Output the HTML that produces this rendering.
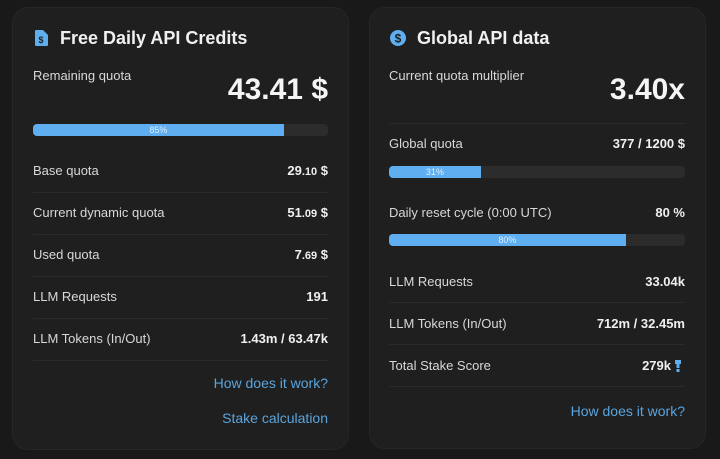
<!DOCTYPE html>
<html><head><meta charset="utf-8"><style>
*{margin:0;padding:0;box-sizing:border-box}
body{width:720px;height:459px;background:#191919;font-family:"Liberation Sans",sans-serif;position:relative;overflow:hidden;color:#e6e6e6}
.card{position:absolute;top:7px;background:#1f1f1f;border:1px solid #262626;border-radius:16px}
.a{position:absolute;white-space:nowrap}
.t{font-size:18px;font-weight:bold;color:#f0f0f0}
.l{font-size:13px;color:#d8d8d8}
.v{font-size:13px;font-weight:bold;color:#f0f0f0;text-align:right}
.v small{font-size:11px}
.big{font-size:30px;font-weight:bold;color:#f5f5f5;text-align:right}
.bar{position:absolute;height:12px;background:#2c2c2c;border-radius:4px;overflow:hidden}
.bar div{height:100%;background:#5eaef0;font-size:9px;color:#dff0ff;text-align:center;line-height:12px}
.hr{position:absolute;height:1px;background:#2a2a2a}
.lk{font-size:14px;color:#5aa5de;text-align:right}
</style></head><body>
<div class="card" style="left:12px;width:337px;height:443px"></div>
<div class="card" style="left:369px;width:337px;height:442px"></div>

<svg class="a" style="left:35px;top:30px" width="13" height="16" viewBox="0 0 13 16"><path d="M1 0h7l5 5v10a1 1 0 0 1-1 1H1a1 1 0 0 1-1-1V1a1 1 0 0 1 1-1z" fill="#5eaef0"/><text x="6" y="13" font-size="9" font-weight="bold" fill="#1f1f1f" text-anchor="middle" font-family="Liberation Sans">$</text></svg>
<div class="a t" style="left:60px;top:28px">Free Daily API Credits</div>
<div class="a l" style="left:33px;top:68px">Remaining quota</div>
<div class="a big" style="right:392px;top:73px">43.41 $</div>
<div class="bar" style="left:33px;top:124px;width:295px"><div style="width:85%">85%</div></div>

<div class="a l" style="left:33px;top:163px">Base quota</div><div class="a v" style="right:392px;top:163px">29<small>.10</small> $</div>
<div class="hr" style="left:33px;width:295px;top:192px"></div>
<div class="a l" style="left:33px;top:205px">Current dynamic quota</div><div class="a v" style="right:392px;top:205px">51<small>.09</small> $</div>
<div class="hr" style="left:33px;width:295px;top:234px"></div>
<div class="a l" style="left:33px;top:247px">Used quota</div><div class="a v" style="right:392px;top:247px">7<small>.69</small> $</div>
<div class="hr" style="left:33px;width:295px;top:276px"></div>
<div class="a l" style="left:33px;top:289px">LLM Requests</div><div class="a v" style="right:392px;top:289px">191</div>
<div class="hr" style="left:33px;width:295px;top:318px"></div>
<div class="a l" style="left:33px;top:331px">LLM Tokens (In/Out)</div><div class="a v" style="right:392px;top:331px">1.43m / 63.47k</div>
<div class="hr" style="left:33px;width:295px;top:360px"></div>
<div class="a lk" style="right:392px;top:375px">How does it work?</div>
<div class="a lk" style="right:392px;top:410px">Stake calculation</div>

<svg class="a" style="left:390px;top:30px" width="16" height="16" viewBox="0 0 16 16"><circle cx="8" cy="8" r="8" fill="#5eaef0"/><text x="8" y="12.5" font-size="12" font-weight="bold" fill="#1f1f1f" text-anchor="middle" font-family="Liberation Sans">$</text></svg>
<div class="a t" style="left:417px;top:28px">Global API data</div>
<div class="a l" style="left:389px;top:68px">Current quota multiplier</div>
<div class="a big" style="right:35px;top:73px">3.40x</div>
<div class="hr" style="left:389px;width:296px;top:123px"></div>
<div class="a l" style="left:389px;top:136px">Global quota</div><div class="a v" style="right:35px;top:136px">377 / 1200 $</div>
<div class="bar" style="left:389px;top:166px;width:296px"><div style="width:31%">31%</div></div>
<div class="a l" style="left:389px;top:205px">Daily reset cycle (0:00 UTC)</div><div class="a v" style="right:35px;top:205px">80 %</div>
<div class="bar" style="left:389px;top:234px;width:296px"><div style="width:80%">80%</div></div>
<div class="a l" style="left:389px;top:274px">LLM Requests</div><div class="a v" style="right:35px;top:274px">33.04k</div>
<div class="hr" style="left:389px;width:296px;top:302px"></div>
<div class="a l" style="left:389px;top:316px">LLM Tokens (In/Out)</div><div class="a v" style="right:35px;top:316px">712m / 32.45m</div>
<div class="hr" style="left:389px;width:296px;top:344px"></div>
<div class="a l" style="left:389px;top:358px">Total Stake Score</div><div class="a v" style="right:49px;top:358px">279k</div>
<svg class="a" style="left:675px;top:360px" width="6" height="12" viewBox="0 0 6 12"><rect x="0" y="0" width="6" height="4" fill="#5eaef0"/><rect x="1.5" y="4" width="3" height="4" fill="#5eaef0"/><rect x="1.5" y="9" width="3" height="3" fill="#5eaef0"/></svg>
<div class="hr" style="left:389px;width:296px;top:386px"></div>
<div class="a lk" style="right:35px;top:403px">How does it work?</div>
</body></html>
